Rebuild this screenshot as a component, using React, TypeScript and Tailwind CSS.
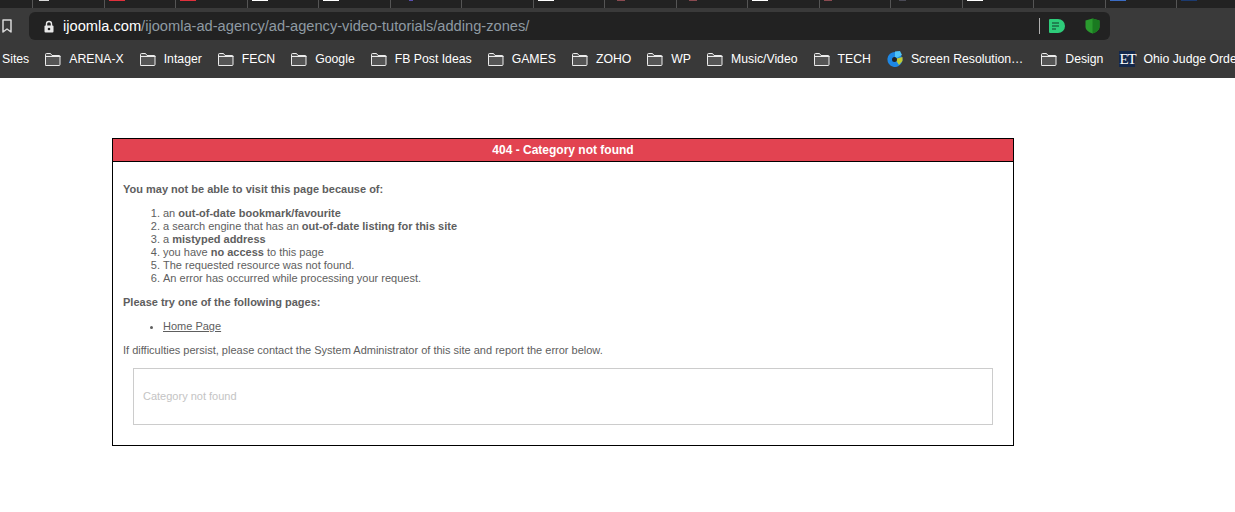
const tabFavicons = [
  { left: 6, width: 10, color: 'bg-[#d8d8d8]' },
  { left: 4, width: 16, color: 'bg-[#e0303c]' },
  { left: 4, width: 16, color: 'bg-[#e0303c]' },
  { left: 4, width: 16, color: 'bg-white' },
  { left: 4, width: 16, color: 'bg-white' },
  { left: 18, width: 4, color: 'bg-[#5a4fb0]' },
  { left: 0, width: 0, color: '' },
  { left: 4, width: 16, color: 'bg-white' },
  { left: 12, width: 8, color: 'bg-[#8a4a50]' },
  { left: 12, width: 8, color: 'bg-[#8a4a50]' },
  { left: 4, width: 16, color: 'bg-white' },
  { left: 4, width: 8, color: 'bg-[#8a4a50]' },
  { left: 8, width: 7, color: 'bg-[#4a4a55]' },
  { left: 4, width: 16, color: 'bg-white' },
  { left: 0, width: 0, color: '' },
  { left: 4, width: 16, color: 'bg-[#3b6cc4]' },
  { left: 4, width: 16, color: 'bg-[#1c3a6e]' },
];

const bookmarks = ['ARENA-X', 'Intager', 'FECN', 'Google', 'FB Post Ideas', 'GAMES', 'ZOHO', 'WP', 'Music/Video', 'TECH'];

function FolderIcon() {
  return (
    <svg width="16" height="13" viewBox="0 0 16 13" fill="none" className="shrink-0">
      <path d="M0.5 11.500V1.500a1 1 0 0 1 1-1h4l1.500 2h7.500a.5.5 0 0 1 .5.5v8.500a1 1 0 0 1-1 1h-13a1 1 0 0 1-1-1z" fill="#555555" stroke="#ececec" />
      <path d="M0.500 3.500h15" stroke="#ececec" />
    </svg>
  );
}

function Bookmark({ label }: { label: string }) {
  return (
    <div className="flex items-center gap-2 shrink-0">
      <FolderIcon />
      <span>{label}</span>
    </div>
  );
}

export default function App() {
  return (
    <div className="h-[512px] overflow-hidden bg-white font-['Liberation_Sans',Arial,sans-serif]">
      {/* Tab strip */}
      <div className="h-2 bg-[#222222] flex pl-8 overflow-hidden">
        {tabFavicons.map((tab, i) => (
          <div key={i} className="relative w-[71.5px] h-2 border-l border-[#555555] shrink-0">
            {tab.width > 0 && <div className={`absolute top-0 h-[1px] ${tab.color}`} style={{ left: tab.left, width: tab.width }} />}
          </div>
        ))}
      </div>

      {/* Toolbar */}
      <div className="h-8 pt-1 bg-[#3a3a3a] flex">
        <div className="w-[29px] flex justify-start pl-[2px] pt-[7px]">
          <svg width="10" height="14" viewBox="0 0 10 14" fill="none">
            <path d="M1 1h8v12L5 10l-4 3z" stroke="#d8d8d8" strokeWidth="1.5" strokeLinejoin="round" />
          </svg>
        </div>
        <div className="w-[1081px] h-7 bg-[#222222] rounded-md flex items-center pl-[14px] pr-[10px]">
          <svg width="12" height="13" viewBox="0 0 12 13" className="shrink-0">
            <path d="M3.500 6V4a2.500 2.500 0 0 1 5 0v2" fill="none" stroke="#e8e8e8" strokeWidth="1.400" />
            <rect x="1.500" y="5.500" width="9" height="7" rx="1" fill="#e8e8e8" />
            <circle cx="6" cy="9" r="1.300" fill="#222222" />
          </svg>
          <div className="ml-2 pt-px text-[14.65px] text-[#8f9aa3] whitespace-nowrap">
            <span className="text-white">ijoomla.com</span>/ijoomla-ad-agency/ad-agency-video-tutorials/adding-zones/
          </div>
          <div className="ml-auto h-4 w-px bg-[#b0b0b0]" />
          <svg width="16" height="14" viewBox="0 0 16 14" className="ml-[9px] shrink-0">
            <path d="M0 1a1 1 0 0 1 1-1h8a7 7 0 0 1 0 14H1a1 1 0 0 1-1-1z" fill="#2ecc7a" />
            <path d="M3 4h7M3 7h7M3 10h4" stroke="#1d6b45" strokeWidth="1.300" />
          </svg>
          <svg width="15" height="16" viewBox="0 0 15 16" className="ml-5 shrink-0">
            <path d="M7.500 0.500L14.500 2.500V9c0 3-3.500 5.500-7 6.500C4 14.500 0.500 12 0.500 9V2.500z" fill="#2a9a2e" />
            <path d="M7.500 0.500L14.500 2.500V9c0 3-3.500 5.500-7 6.500z" fill="#1a7a20" />
          </svg>
        </div>
      </div>

      {/* Bookmarks bar */}
      <div className="h-[38px] bg-[#393939] flex items-center gap-4 pl-[2px] text-[12.25px] text-white overflow-hidden whitespace-nowrap">
        <span className="shrink-0">Sites</span>
        {bookmarks.map((b) => (
          <Bookmark key={b} label={b} />
        ))}
        <div className="flex items-center gap-2 shrink-0 mr-[2px]">
          <svg width="16" height="16" viewBox="0 0 16 16" className="shrink-0">
            <path d="M8 1a7.500 7.500 0 1 0 7 10L15.500 8 13 2l-2-1.500z" fill="#1e88e5" />
            <path d="M8 0.500L13 0l2 4-7 4z" fill="#4fc3f7" />
            <path d="M8 8l7.500-2v4L12 14z" fill="#c0ca33" />
            <circle cx="7.500" cy="8.500" r="2.500" fill="#222222" />
          </svg>
          <span>Screen Resolution…</span>
        </div>
        <Bookmark label="Design" />
        <div className="flex items-center gap-2 shrink-0">
          <div className="w-4 h-4 bg-[#14284b] text-white font-['Liberation_Serif',serif] text-[15px] leading-4 text-center tracking-[-1px]">ET</div>
          <span>Ohio Judge Orde</span>
        </div>
      </div>

      {/* Error box */}
      <div className="pt-[60px] pl-[112px]">
        <div className="w-[902px] h-[308px] border border-black text-[11px] leading-[13px] text-[#5e5e5e]">
          <div className="h-[23px] bg-[#e24351] border-b border-black flex items-center justify-center text-white font-bold text-xs">
            404 - Category not found
          </div>
          <div className="px-[10px] pt-[21px]">
            <p className="font-bold">You may not be able to visit this page because of:</p>
            <ol className="list-decimal pl-10 mt-[11px]">
              <li>an <b>out-of-date bookmark/favourite</b></li>
              <li>a search engine that has an <b>out-of-date listing for this site</b></li>
              <li>a <b>mistyped address</b></li>
              <li>you have <b>no access</b> to this page</li>
              <li>The requested resource was not found.</li>
              <li>An error has occurred while processing your request.</li>
            </ol>
            <p className="font-bold mt-[11px]">Please try one of the following pages:</p>
            <ul className="list-disc pl-10 mt-[11px]">
              <li><a href="#" className="underline">Home Page</a></li>
            </ul>
            <p className="mt-[11px]">If difficulties persist, please contact the System Administrator of this site and report the error below.</p>
            <div className="mt-[11px] mx-[10px] h-[57px] border border-[#cccccc] flex items-center px-[9px] text-[#c4c4c4]">
              Category not found
            </div>
          </div>
        </div>
      </div>
    </div>
  );
}
